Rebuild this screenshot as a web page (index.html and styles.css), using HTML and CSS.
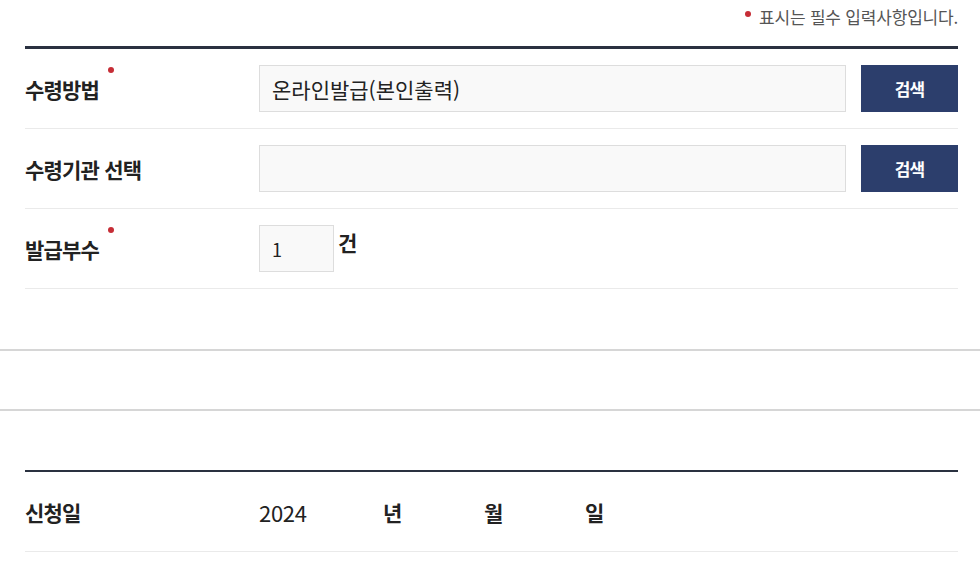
FILE: index.html
```html
<!DOCTYPE html>
<html lang="ko">
<head>
    <meta charset="UTF-8">
    <meta name="viewport" content="width=device-width, initial-scale=1.0">
    <title>발급신청</title>
    <link rel="stylesheet" href="styles.css">
</head>
<body>
    <div class="wrap">
        <p class="note"><span class="dot"></span>표시는 필수 입력사항입니다.</p>
        <div class="form-table">
            <div class="row">
                <div class="label">수령방법<span class="dot"></span></div>
                <div class="field">
                    <input type="text" class="text-input" value="온라인발급(본인출력)" readonly>
                    <button type="button" class="btn">검색</button>
                </div>
            </div>
            <div class="row">
                <div class="label">수령기관 선택</div>
                <div class="field">
                    <input type="text" class="text-input" value="" readonly>
                    <button type="button" class="btn">검색</button>
                </div>
            </div>
            <div class="row">
                <div class="label">발급부수<span class="dot"></span></div>
                <div class="field">
                    <input type="text" class="count-input" value="1">
                    <span class="unit">건</span>
                </div>
            </div>
        </div>
    </div>

    <!-- 구분 영역 -->
    <div class="divider"></div>

    <div class="wrap">
        <div class="form-table date-table">
            <div class="row">
                <div class="label">신청일</div>
                <div class="field date">
                    <span class="year">2024</span>
                    <span class="unit">년</span>
                    <span class="unit">월</span>
                    <span class="unit">일</span>
                </div>
            </div>
        </div>
    </div>
</body>
</html>
```

FILE: styles.css
```css
* {
    margin: 0;
    padding: 0;
    box-sizing: border-box;
    font-family: 'Noto Sans CJK KR', 'Noto Sans', sans-serif;
}
body {
    background-color: #fff;
    color: #222;
}
.wrap {
    margin: 0 22px 0 25px;
}
/* 필수 안내 */
.note {
    text-align: right;
    font-size: 17px;
    line-height: 20px;
    letter-spacing: -0.2px;
    color: #555;
    padding-top: 7px;
    height: 46px;
}
.note .dot {
    top: -7px;
    margin-right: 8px;
}
.dot {
    display: inline-block;
    position: relative;
    width: 6px;
    height: 6px;
    border-radius: 50%;
    background-color: #c62d36;
}
.label .dot {
    top: -25px;
    margin-left: 9px;
}
/* 입력 테이블 */
.form-table {
    border-top: 3px solid #2a3140;
}
.row {
    display: flex;
    align-items: center;
    padding: 16px 0;
    border-bottom: 1px solid #eaeaea;
}
.label {
    width: 234px;
    font-size: 21px;
    font-weight: bold;
    letter-spacing: -0.8px;
    color: #222;
}
.field {
    flex: 1;
    display: flex;
    align-items: center;
}
.text-input {
    flex: 1;
    height: 47px;
    padding: 0 12px;
    font-size: 21px;
    letter-spacing: 0;
    color: #222;
    background-color: #f9f9f9;
    border: 1px solid #ddd;
    outline: none;
}
.btn {
    width: 97px;
    height: 47px;
    margin-left: 15px;
    background-color: #2c3e6c;
    color: #fff;
    border: none;
    font-size: 17px;
    font-weight: bold;
    letter-spacing: -1px;
    cursor: pointer;
}
.count-input {
    width: 75px;
    height: 47px;
    padding: 0 12px;
    font-size: 18px;
    color: #222;
    background-color: #f9f9f9;
    border: 1px solid #ddd;
    outline: none;
}
.unit {
    font-size: 21px;
    font-weight: bold;
    color: #222;
}
.field .count-input + .unit {
    margin-left: 4px;
    align-self: flex-start;
    margin-top: 2px;
}
/* 구분선 */
.divider {
    height: 62px;
    margin-top: 60px;
    border-top: 2px solid #d6d6d6;
    border-bottom: 2px solid #d6d6d6;
}
.date-table {
    margin-top: 59px;
    border-top-width: 2px;
}
.date-table .row {
    height: 80px;
    padding: 0;
}
.date .year {
    font-size: 22px;
    width: 124px;
    letter-spacing: -0.3px;
}
.date .unit {
    width: 101px;
}
```
